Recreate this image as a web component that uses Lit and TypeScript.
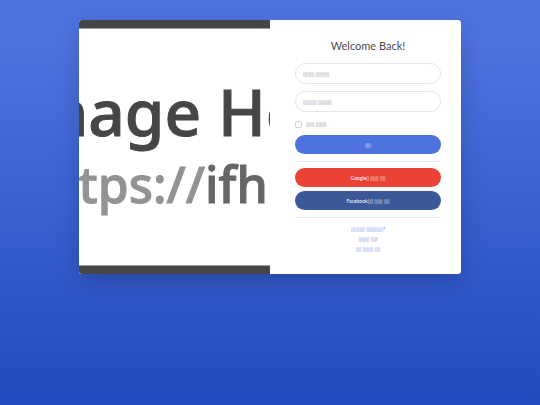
import { LitElement, html, css } from "lit";
import { customElement } from "lit/decorators.js";

@customElement("login-banner")
class LoginBanner extends LitElement {
  static styles = css`
    :host { display: block; min-width: 0; position: relative; background: #fff; }
    .art { position: absolute; inset: 0; width: 100%; height: 100%; display: block; }
    .ink { font-family: "Noto Sans", sans-serif; font-weight: 500; stroke-width: 1px; }
    .title { font-size: 64px; fill: #464646; stroke: #464646; }
    .address { font-size: 50px; fill: #939393; stroke: #939393; }
    .host { fill: #666; stroke: #666; }
    .bar { fill: #464646; }
    .edge { fill: #a0a0a0; }
    .soft { filter: blur(0.6px); }
  `;
  render() {
    return html`<svg class="art" viewBox="0 0 191 254" preserveAspectRatio="xMidYMid slice" role="img" aria-label="Image Hosting">
      <rect class="bar" width="191" height="8" />
      <rect class="edge" y="8" width="191" height="1" />
      <rect class="edge" y="245" width="191" height="1" />
      <rect class="bar" y="246" width="191" height="8" />
      <g class="ink soft">
        <text class="title" x="-74" y="116">Image Hosting</text>
        <text class="address" x="-51" y="183">https://<tspan class="host">ifh.cc</tspan></text>
      </g>
    </svg>`;
  }
}

@customElement("app-root")
class AppRoot extends LitElement {
  static styles = css`
    * { box-sizing: border-box; }
    :host {
      display: block;
      min-height: 100vh;
      box-sizing: border-box;
      padding: 20px;
      background: linear-gradient(180deg, #4e73df 10%, #224abe 100%);
      font-family: Lato, "DejaVu Sans", sans-serif;
      font-size: 5px;
      line-height: 10px;
      color: #6e707e;
    }
    .card {
      display: grid;
      grid-template-columns: 1fr 1fr;
      max-width: 382px;
      margin: 0 auto;
      border-radius: 3px;
      overflow: hidden;
      background: #fff;
      box-shadow: 0 8px 24px rgba(0, 0, 0, 0.18);
    }
    .panel { padding: 20px 20px 20px 25px; }
    h1 {
      margin: 0 0 11px;
      font-size: 11px;
      line-height: 12px;
      font-weight: 400;
      color: #4a4b55;
      text-align: center;
    }
    form { display: flex; flex-direction: column; }
    .field {
      width: 100%;
      height: 21px;
      margin-bottom: 7px;
      padding: 0 7px;
      border: 1px solid #e3e5ee;
      border-radius: 11px;
      background: #fff;
      font: inherit;
      color: #6e707e;
      outline: none;
    }
    .field::placeholder { color: #6e707e; opacity: 1; }
    .remember { display: flex; align-items: center; gap: 4px; margin-bottom: 6px; }
    .tick {
      appearance: none;
      width: 7px;
      height: 7px;
      margin: 0;
      border: 1px solid #cdd0de;
      border-radius: 2px;
      background: #fff;
    }
    .tick:checked { background: #4e73df; }
    .btn {
      width: 100%;
      height: 19px;
      padding: 0;
      border: 0;
      border-radius: 10px;
      font: inherit;
      color: #fff;
      cursor: pointer;
    }
    .login { background: #4e73df; }
    .google { background: #ea4335; margin-bottom: 4px; }
    .facebook { background: #3b5998; }
    hr { width: 100%; height: 1px; margin: 7px 0 6px; border: 0; background: #ececf0; }
    .links { display: flex; flex-direction: column; align-items: center; }
    a { color: #4e73df; text-decoration: none; }
  `;
  render() {
    return html`<main class="card">
      <login-banner></login-banner>
      <section class="panel">
        <h1>Welcome Back!</h1>
        <form @submit=${(e: Event) => e.preventDefault()}>
          <input class="field" type="text" placeholder="▯▯▯▯ ▯▯▯▯▯" aria-label="▯▯▯▯ ▯▯▯▯▯" />
          <input class="field" type="password" placeholder="▯▯▯▯▯ ▯▯▯▯▯" aria-label="▯▯▯▯▯ ▯▯▯▯▯" />
          <div class="remember">
            <input class="tick" type="checkbox" id="remember" />
            <label for="remember">▯▯▯ ▯▯▯▯</label>
          </div>
          <button class="btn login" type="submit">▯▯</button>
          <hr />
          <button class="btn google" type="button">Google▯ ▯▯▯ ▯▯</button>
          <button class="btn facebook" type="button">Facebook▯▯ ▯▯▯ ▯▯</button>
          <hr />
        </form>
        <nav class="links">
          <a href="#password">▯▯▯▯▯ ▯▯▯▯▯▯?</a>
          <a href="#register">▯▯▯▯ ▯▯!</a>
          <a href="#home">▯▯ ▯▯▯▯ ▯▯</a>
        </nav>
      </section>
    </main>`;
  }
}
